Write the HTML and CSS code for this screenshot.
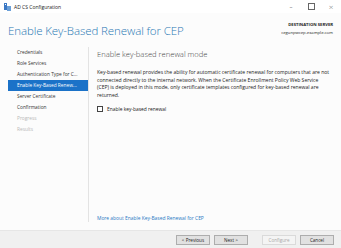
FILE: index.html
```html
<!DOCTYPE html>
<html>
<head>
<meta charset="utf-8">
<link rel="stylesheet" href="styles.css">
</head>
<body>
<div class="window">
  <div class="titlebar">
    <svg class="appicon" width="7" height="8" viewBox="0 0 7 8">
      <rect x="0" y="0" width="3" height="7" fill="#3b78c4"/>
      <rect x="3" y="3" width="4" height="5" fill="#6a9fd8"/>
      <rect x="1" y="1" width="1" height="1" fill="#fff"/>
    </svg>
    <span class="apptitle">AD CS Configuration</span>
    <div class="controls">
      <span class="ctl min">&#8211;</span>
      <span class="ctl max"></span>
      <span class="ctl close">&#215;</span>
    </div>
  </div>
  <div class="header">
    <h1 class="title">Enable Key-Based Renewal for CEP</h1>
    <div class="dest">
      <div class="dest-label">DESTINATION SERVER</div>
      <div class="dest-name">cegunpwcep.example.com</div>
    </div>
  </div>
  <div class="main">
    <nav class="nav">
      <div class="nav-item">Credentials</div>
      <div class="nav-item">Role Services</div>
      <div class="nav-item">Authentication Type for C...</div>
      <div class="nav-item active">Enable Key-Based Renew...</div>
      <div class="nav-item">Server Certificate</div>
      <div class="nav-item">Confirmation</div>
      <div class="nav-item disabled">Progress</div>
      <div class="nav-item disabled">Results</div>
    </nav>
    <section class="content">
      <h2 class="heading">Enable key-based renewal mode</h2>
      <p class="desc">Key-based renewal provides the ability for automatic certificate renewal for computers that are not connected directly to the internal network. When the Certificate Enrollment Policy Web Service (CEP) is deployed in this mode, only certificate templates configured for key-based renewal are returned.</p>
      <label class="check"><span class="box"></span>Enable key-based renewal</label>
      <div class="spacer"></div>
      <a class="more">More about Enable Key-Based Renewal for CEP</a>
    </section>
  </div>
  <div class="footer">
    <button class="btn">&lt; Previous</button>
    <button class="btn">Next &gt;</button>
    <button class="btn off gap">Configure</button>
    <button class="btn">Cancel</button>
  </div>
</div>
</body>
</html>
```
FILE: styles.css
```css
* { box-sizing: border-box; margin: 0; padding: 0; }
html, body { width: 341px; height: 248px; overflow: hidden; }
body {
  font-family: "Open Sans", "Noto Sans", sans-serif;
  background: #fcfcfc;
  color: #1e1e1e;
}
.window {
  width: 341px;
  height: 248px;
  display: flex;
  flex-direction: column;
  background: #fcfcfc;
}
.titlebar {
  height: 13px;
  display: flex;
  align-items: center;
  background: #ffffff;
  padding-left: 4px;
}
.appicon { margin-right: 3px; }
.apptitle { font-size: 5px; color: #222; }
.controls { margin-left: auto; display: flex; align-items: center; }
.ctl {
  width: 20px;
  display: flex;
  justify-content: center;
  align-items: center;
  font-size: 6px;
  color: #555;
  height: 13px;
}
.max::before {
  content: "";
  width: 5px;
  height: 5px;
  border: 1px solid #666;
}
.close { font-size: 8px; font-weight: 300; }
.header {
  display: flex;
  justify-content: space-between;
  align-items: flex-start;
  padding: 8px 8px 0 8px;
  height: 34px;
}
.title {
  font-weight: 300;
  font-size: 11.5px;
  color: #2a79b4;
  margin-top: 2px;
  letter-spacing: -0.1px;
}
.dest { text-align: right; }
.dest-label { font-size: 4.2px; font-weight: 700; color: #222; line-height: 7px; }
.dest-name { font-size: 4.2px; color: #222; line-height: 8px; margin-top: 1px; }
.main {
  flex: 1;
  display: flex;
  padding-bottom: 8px;
}
.nav {
  width: 80px;
  margin-left: 8px;
  display: flex;
  flex-direction: column;
}
.nav-item {
  height: 11px;
  line-height: 11px;
  font-size: 4.8px;
  padding-left: 9px;
  color: #333;
  white-space: nowrap;
}
.nav-item.active { background: #1b72c8; color: #fff; }
.nav-item.disabled { color: #b8b8b8; }
.content {
  flex: 1;
  border-left: 1px solid #e3e3e3;
  margin-left: 0;
  padding: 2px 3px 0 8px;
  display: flex;
  flex-direction: column;
}
.heading {
  font-weight: 300;
  font-size: 7.6px;
  color: #444;
  line-height: 10px;
}
.desc {
  margin-top: 10px;
  margin-right: 7px;
  font-size: 5.05px;
  line-height: 7.6px;
  color: #222;
}
.check {
  margin-top: 7px;
  display: flex;
  align-items: center;
  font-size: 4.9px;
  color: #222;
}
.box {
  width: 6px;
  height: 6px;
  border: 1px solid #444;
  background: #fff;
  margin-right: 4px;
}
.spacer { flex: 1; }
.more { font-size: 4.9px; color: #2a79c4; line-height: 8px; }
.footer {
  height: 18px;
  background: #f0f0f0;
  border-top: 1px solid #e6e6e6;
  display: flex;
  align-items: center;
  justify-content: flex-end;
  padding-right: 7px;
  gap: 4px;
}
.btn {
  width: 34px;
  height: 10px;
  font-family: inherit;
  font-size: 4.6px;
  background: #e1e1e1;
  border: 1px solid #adadad;
  color: #222;
}
.btn.gap { margin-left: 10px; }
.btn.off { background: #f4f4f4; border-color: #dadada; color: #a8a8a8; }
```
